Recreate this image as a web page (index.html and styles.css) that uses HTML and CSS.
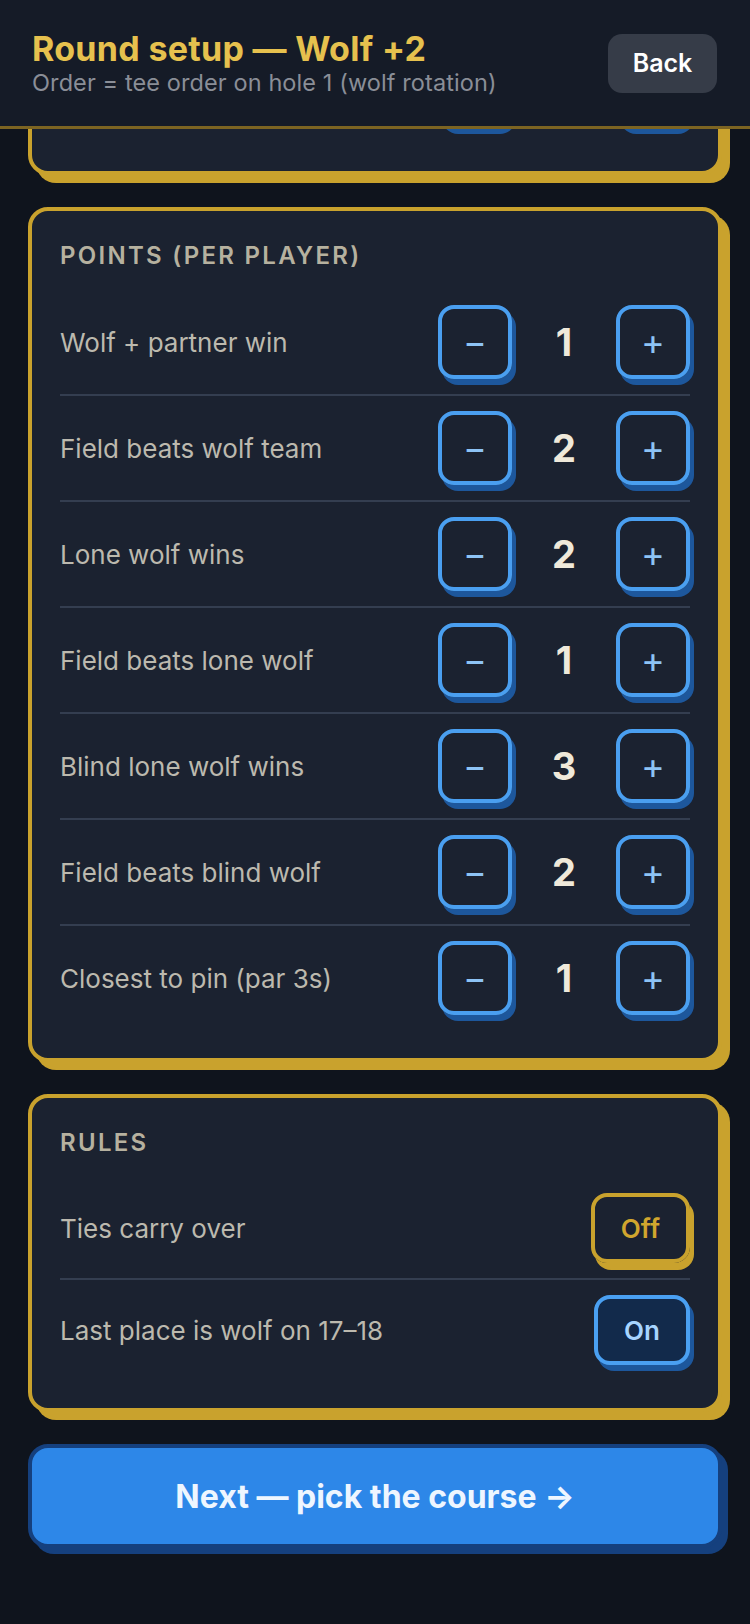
FILE: index.html
```html
<!DOCTYPE html>
<html lang="en">
<head>
  <meta charset="UTF-8">
  <meta name="viewport" content="width=device-width, initial-scale=1.0">
  <title>Round setup — Wolf +2</title>
  <link rel="stylesheet" href="styles.css">
</head>
<body>

  <div class="app">
    <!-- Top bar -->
    <header class="topbar">
      <div class="titles">
        <h1>Round setup — Wolf +2</h1>
        <p class="sub">Order = tee order on hole 1 (wolf rotation)</p>
      </div>
      <button class="back">Back</button>
    </header>

    <main class="scroll" id="scroll">

      <!-- Stakes -->
      <section class="card">
        <h2>Stakes</h2>
        <div class="row">
          <span class="label">Dollars per point</span>
          <div class="stepper">
            <button class="step">−</button>
            <span class="count">1</span>
            <button class="step">+</button>
          </div>
        </div>
      </section>

      <!-- Points -->
      <section class="card">
        <h2>Points (per player)</h2>
        <div class="row">
          <span class="label">Wolf + partner win</span>
          <div class="stepper">
            <button class="step">−</button>
            <span class="count">1</span>
            <button class="step">+</button>
          </div>
        </div>
        <div class="row">
          <span class="label">Field beats wolf team</span>
          <div class="stepper">
            <button class="step">−</button>
            <span class="count">2</span>
            <button class="step">+</button>
          </div>
        </div>
        <div class="row">
          <span class="label">Lone wolf wins</span>
          <div class="stepper">
            <button class="step">−</button>
            <span class="count">2</span>
            <button class="step">+</button>
          </div>
        </div>
        <div class="row">
          <span class="label">Field beats lone wolf</span>
          <div class="stepper">
            <button class="step">−</button>
            <span class="count">1</span>
            <button class="step">+</button>
          </div>
        </div>
        <div class="row">
          <span class="label">Blind lone wolf wins</span>
          <div class="stepper">
            <button class="step">−</button>
            <span class="count">3</span>
            <button class="step">+</button>
          </div>
        </div>
        <div class="row">
          <span class="label">Field beats blind wolf</span>
          <div class="stepper">
            <button class="step">−</button>
            <span class="count">2</span>
            <button class="step">+</button>
          </div>
        </div>
        <div class="row">
          <span class="label">Closest to pin (par 3s)</span>
          <div class="stepper">
            <button class="step">−</button>
            <span class="count">1</span>
            <button class="step">+</button>
          </div>
        </div>
      </section>

      <!-- Rules -->
      <section class="card rules">
        <h2>Rules</h2>
        <div class="row">
          <span class="label">Ties carry over</span>
          <button class="toggle">Off</button>
        </div>
        <div class="row">
          <span class="label">Last place is wolf on 17–18</span>
          <button class="toggle on">On</button>
        </div>
      </section>

      <button class="next">Next — pick the course →</button>
    </main>
  </div>

  <script>
    function toBottom() {
      const s = document.getElementById('scroll');
      s.scrollTop = s.scrollHeight;
    }
    toBottom();
    window.addEventListener('load', toBottom);
  </script>
</body>
</html>
```

FILE: styles.css
```css
/* Dark round setup screen */
body {
  margin: 0;
  background-color: #0f141d;
  font-family: Inter, "Liberation Sans", sans-serif;
  color: #bcb9ae;
}

button {
  font-family: inherit;
  cursor: pointer;
}

.app {
  height: 100vh;
  display: flex;
  flex-direction: column;
}

/* top bar */
.topbar {
  flex: none;
  height: 129px;
  box-sizing: border-box;
  padding: 0 33px 0 32px;
  display: flex;
  align-items: center;
  justify-content: space-between;
  background-color: #151b27;
  border-bottom: 3px solid #7c6422;
}

.titles h1 {
  margin: 0;
  font-size: 34px;
  line-height: 40px;
  font-weight: 700;
  letter-spacing: 0.3px;
  color: #e6c14e;
}

.sub {
  margin: 0;
  font-size: 23.5px;
  line-height: 28px;
  letter-spacing: 0.1px;
  color: #8a8e97;
}

.back {
  width: 109px;
  height: 59px;
  border: none;
  border-radius: 14px;
  background-color: #363c48;
  color: #ffffff;
  font-size: 25px;
  font-weight: 600;
}

/* scrolling body */
.scroll {
  flex: 1;
  overflow-y: auto;
  scrollbar-width: none;
  padding: 32px 28px 76px;
  display: flex;
  flex-direction: column;
  gap: 32px;
}

.scroll::-webkit-scrollbar {
  display: none;
}

.card {
  flex: none;
  background-color: #1b2230;
  border: 4px solid #c9a22d;
  border-radius: 20px;
  box-shadow: 8px 8px 0 #c9a22d;
  padding: 28px;
}

.card h2 {
  margin: 3px 0 21px;
  font-size: 24px;
  line-height: 27px;
  font-weight: 600;
  letter-spacing: 0.095em;
  text-transform: uppercase;
  color: #b6b19f;
}

.rules h2 {
  margin-bottom: 22px;
}

.row {
  display: flex;
  align-items: center;
  justify-content: space-between;
  padding: 15px 0;
  border-bottom: 2px solid #343e50;
}

.row:last-child {
  border-bottom: none;
}

.label {
  font-size: 26px;
  color: #bcb9ae;
}

/* number stepper */
.stepper {
  display: flex;
  align-items: center;
  gap: 12px;
}

.step {
  width: 74px;
  height: 74px;
  border: 4px solid #4a9ff0;
  border-radius: 16px;
  background-color: transparent;
  box-shadow: 4px 6px 0 #1d579c;
  color: #8dc3f5;
  font-size: 36px;
  font-weight: 400;
  line-height: 1;
  padding: 0;
}

.count {
  width: 80px;
  text-align: center;
  font-size: 38px;
  font-weight: 700;
  color: #efe9da;
}

/* on / off switch */
.toggle {
  height: 70px;
  padding: 0 26px;
  border: 4px solid #c9a22d;
  border-radius: 16px;
  background-color: transparent;
  box-shadow: 4px 7px 0 #c9a22d;
  color: #d1a62e;
  font-size: 26px;
  font-weight: 600;
}

.toggle.on {
  border-color: #4aa0f2;
  background-color: #122a4b;
  box-shadow: 4px 6px 0 #1d579c;
  color: #a6d4ff;
}

.next {
  flex: none;
  height: 104px;
  border: 4px solid #15407e;
  border-radius: 20px;
  background-color: #2d87e8;
  box-shadow: 6px 6px 0 #15407e;
  color: #eef6ff;
  font-size: 32px;
  font-weight: 700;
}
```
